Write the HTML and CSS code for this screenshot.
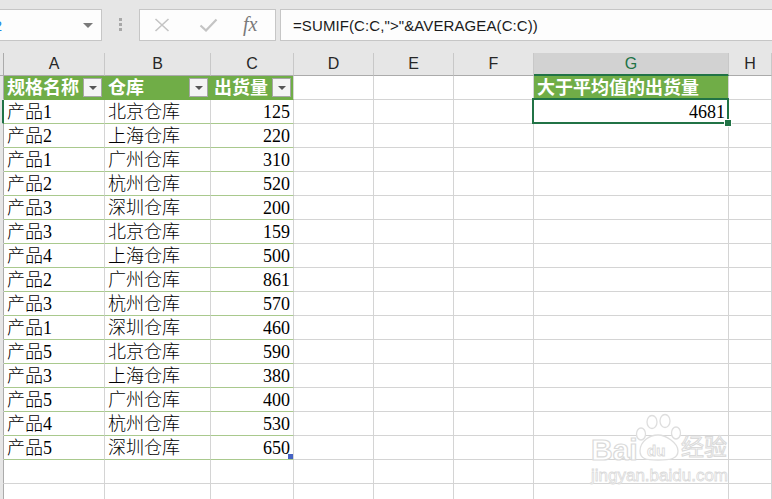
FILE: index.html
```html
<!DOCTYPE html>
<html lang="zh">
<head>
<meta charset="utf-8">
<title>Excel SUMIF</title>
<link rel="stylesheet" href="styles.css">
</head>
<body>
<div class="toolbar">
  <div class="namebox"><span class="nb-text">G2</span><span class="nb-arrow"></span></div>
  <div class="grip"><i></i><i></i><i></i></div>
  <div class="fxbox">
    <svg class="ic" width="16" height="14" viewBox="0 0 16 14"><path d="M1.5 1 L14.5 13 M14.5 1 L1.5 13" stroke="#c4c4c4" stroke-width="1.6" fill="none"/></svg>
    <svg class="ic" width="19" height="14" viewBox="0 0 19 14"><path d="M1.5 7.5 L7 12.5 L17.5 1.5" stroke="#c4c4c4" stroke-width="2.2" fill="none"/></svg>
    <span class="fx">fx</span>
  </div>
  <div class="formula">=SUMIF(C:C,"&gt;"&amp;AVERAGEA(C:C))</div>
</div>

<div class="sheet">
  <div class="row colhead">
    <div class="c rh"></div>
    <div class="c">A</div><div class="c">B</div><div class="c">C</div><div class="c">D</div><div class="c">E</div><div class="c">F</div><div class="c sel">G</div><div class="c">H</div>
  </div>

  <div class="row">
    <div class="c rh"></div>
    <div class="c th">规格名称<span class="flt"></span></div>
    <div class="c th">仓库<span class="flt"></span></div>
    <div class="c th last">出货量<span class="flt"></span></div>
    <div class="c"></div><div class="c"></div><div class="c"></div>
    <div class="c th gh">大于平均值的出货量</div><div class="c"></div>
  </div>

  <div class="row">
    <div class="c rh on"></div>
    <div class="c td">产品1</div><div class="c td">北京仓库</div><div class="c td num">125</div>
    <div class="c"></div><div class="c"></div><div class="c"></div>
    <div class="c num active">4681<span class="handle"></span></div><div class="c"></div>
  </div>
  <div class="row"><div class="c rh"></div><div class="c td">产品2</div><div class="c td">上海仓库</div><div class="c td num">220</div><div class="c"></div><div class="c"></div><div class="c"></div><div class="c"></div><div class="c"></div></div>
  <div class="row"><div class="c rh"></div><div class="c td">产品1</div><div class="c td">广州仓库</div><div class="c td num">310</div><div class="c"></div><div class="c"></div><div class="c"></div><div class="c"></div><div class="c"></div></div>
  <div class="row"><div class="c rh"></div><div class="c td">产品2</div><div class="c td">杭州仓库</div><div class="c td num">520</div><div class="c"></div><div class="c"></div><div class="c"></div><div class="c"></div><div class="c"></div></div>
  <div class="row"><div class="c rh"></div><div class="c td">产品3</div><div class="c td">深圳仓库</div><div class="c td num">200</div><div class="c"></div><div class="c"></div><div class="c"></div><div class="c"></div><div class="c"></div></div>
  <div class="row"><div class="c rh"></div><div class="c td">产品3</div><div class="c td">北京仓库</div><div class="c td num">159</div><div class="c"></div><div class="c"></div><div class="c"></div><div class="c"></div><div class="c"></div></div>
  <div class="row"><div class="c rh"></div><div class="c td">产品4</div><div class="c td">上海仓库</div><div class="c td num">500</div><div class="c"></div><div class="c"></div><div class="c"></div><div class="c"></div><div class="c"></div></div>
  <div class="row"><div class="c rh"></div><div class="c td">产品2</div><div class="c td">广州仓库</div><div class="c td num">861</div><div class="c"></div><div class="c"></div><div class="c"></div><div class="c"></div><div class="c"></div></div>
  <div class="row"><div class="c rh"></div><div class="c td">产品3</div><div class="c td">杭州仓库</div><div class="c td num">570</div><div class="c"></div><div class="c"></div><div class="c"></div><div class="c"></div><div class="c"></div></div>
  <div class="row"><div class="c rh"></div><div class="c td">产品1</div><div class="c td">深圳仓库</div><div class="c td num">460</div><div class="c"></div><div class="c"></div><div class="c"></div><div class="c"></div><div class="c"></div></div>
  <div class="row"><div class="c rh"></div><div class="c td">产品5</div><div class="c td">北京仓库</div><div class="c td num">590</div><div class="c"></div><div class="c"></div><div class="c"></div><div class="c"></div><div class="c"></div></div>
  <div class="row"><div class="c rh"></div><div class="c td">产品3</div><div class="c td">上海仓库</div><div class="c td num">380</div><div class="c"></div><div class="c"></div><div class="c"></div><div class="c"></div><div class="c"></div></div>
  <div class="row"><div class="c rh"></div><div class="c td">产品5</div><div class="c td">广州仓库</div><div class="c td num">400</div><div class="c"></div><div class="c"></div><div class="c"></div><div class="c"></div><div class="c"></div></div>
  <div class="row"><div class="c rh"></div><div class="c td">产品4</div><div class="c td">杭州仓库</div><div class="c td num">530</div><div class="c"></div><div class="c"></div><div class="c"></div><div class="c"></div><div class="c"></div></div>
  <div class="row"><div class="c rh"></div><div class="c td">产品5</div><div class="c td">深圳仓库</div><div class="c td num resize">650<span class="rsz"></span></div><div class="c"></div><div class="c"></div><div class="c"></div><div class="c"></div><div class="c"></div></div>
  <div class="row"><div class="c rh"></div><div class="c"></div><div class="c"></div><div class="c"></div><div class="c"></div><div class="c"></div><div class="c"></div><div class="c"></div><div class="c"></div></div>
  <div class="row"><div class="c rh"></div><div class="c"></div><div class="c"></div><div class="c"></div><div class="c"></div><div class="c"></div><div class="c"></div><div class="c"></div><div class="c"></div></div>

  <div class="watermark">
    <svg width="150" height="50" viewBox="0 0 150 50">
      <g fill="#ffffff" stroke="#dedede" stroke-width="1.3">
        <ellipse cx="64" cy="9" rx="5" ry="6.5"/>
        <ellipse cx="77" cy="8" rx="5" ry="6.5"/>
        <ellipse cx="53" cy="21" rx="4.5" ry="6"/>
        <ellipse cx="88" cy="20" rx="4.5" ry="6"/>
        <path d="M52 38 C52 28 62 22 70 22 C78 22 90 30 90 38 C90 46 82 47 70 47 C58 47 52 46 52 38 Z"/>
      </g>
    </svg>
    <span class="wm-bai">Bai</span><span class="wm-du">du</span><span class="wm-jy">经验</span>
    <span class="wm-url">jingyan.baidu.com</span>
  </div>
</div>
</body>
</html>
```
FILE: styles.css
```css
* { box-sizing: border-box; }
html, body { margin: 0; padding: 0; }
body {
  width: 772px;
  height: 499px;
  overflow: hidden;
  background: #ffffff;
  font-family: "Liberation Sans", "Noto Sans CJK SC", sans-serif;
}

/* ---------- toolbar ---------- */
.toolbar {
  height: 53px;
  background: #e6e6e6;
  display: flex;
  align-items: flex-start;
  padding-top: 9px;
}
.namebox {
  width: 102px;
  height: 32px;
  background: #fdfdfd;
  border: 1px solid #c6c6c6;
  border-left: none;
  display: flex;
  align-items: center;
  justify-content: space-between;
  overflow: hidden;
  padding-right: 8px;
}
.nb-text {
  font-size: 15px;
  color: #1e88e5;
  margin-left: -18px;
}
.nb-arrow {
  width: 0; height: 0;
  border-left: 5px solid transparent;
  border-right: 5px solid transparent;
  border-top: 5px solid #7a7a7a;
}
.grip {
  width: 4px;
  margin-left: 17px;
  margin-top: 9px;
  display: flex;
  flex-direction: column;
  gap: 2px;
}
.grip i { display: block; width: 3px; height: 3px; background: #a8a8a8; }
.fxbox {
  margin-left: 16px;
  width: 137px;
  height: 32px;
  background: #fdfdfd;
  border: 1px solid #c6c6c6;
  display: flex;
  align-items: center;
  padding-left: 14px;
}
.fxbox .ic:nth-child(1) { margin-right: 29px; }
.fxbox .ic:nth-child(2) { margin-right: 25px; }
.fx {
  font-family: "Liberation Serif", serif;
  font-style: italic;
  font-size: 20px;
  color: #7a7a7a;
  line-height: 1;
  margin-top: -3px;
}
.formula {
  margin-left: 4px;
  flex: 1;
  height: 32px;
  background: #fdfdfd;
  border: 1px solid #c6c6c6;
  border-right: none;
  font-size: 15px;
  letter-spacing: 0.1px;
  color: #1a1a1a;
  padding-left: 12px;
  display: flex;
  align-items: center;
}

/* ---------- sheet ---------- */
.sheet { position: relative; }
.row {
  display: grid;
  grid-template-columns: 4px 101px 106px 83px 80px 80px 80px 195px 1fr;
  grid-template-rows: 24px;
  height: 24px;
}
.c {
  border-right: 1px solid #d4d4d4;
  border-bottom: 1px solid #d4d4d4;
  display: flex;
  align-items: center;
  white-space: nowrap;
  line-height: 1;
  position: relative;
  min-height: 0;
}
.rh { background: #e6e6e6; border-right-color: #ababab; border-bottom-color: #e6e6e6; }
.rh.on { border-right: 2px solid #217346; }

.colhead { height: 23px; grid-template-rows: 23px; }
.colhead .c {
  background: #e6e6e6;
  border-right-color: #c8c8c8;
  border-bottom-color: #ababab;
  justify-content: center;
  font-size: 16px;
  color: #262626;
}
.colhead .c.rh { border-right-color: #ababab; }
.colhead .c.sel {
  background: #d2d2d2;
  color: #217346;
  border-bottom: 2px solid #217346;
}

.td, .th {
  font-family: "Liberation Serif", "Noto Sans CJK SC", serif;
  font-size: 18px;
  padding-left: 3px;
  border-bottom-color: #a9c98d;
}
.td { color: #000; font-weight: 300; }
.th {
  background: #70ad47;
  color: #ffffff;
  font-weight: bold;
  border-right-color: #70ad47;
  border-bottom-color: #70ad47;
  justify-content: space-between;
  padding-right: 2px;
}
.th.last { border-right-color: #d4d4d4; }
.th.gh { border-right-color: #d4d4d4; }
.flt {
  width: 19px;
  height: 19px;
  background: #f4f4f4;
  border: 1px solid #a6a6a6;
  display: flex;
  align-items: center;
  justify-content: center;
  flex: none;
}
.flt::after {
  content: "";
  border-left: 4px solid transparent;
  border-right: 4px solid transparent;
  border-top: 4px solid #555555;
}
.num {
  justify-content: flex-end;
  padding-right: 3px;
  font-family: "Liberation Serif", serif;
  font-size: 18px;
  color: #000;
}
.active::before {
  content: "";
  position: absolute;
  left: -2px; top: -2px; right: -1px; bottom: -1px;
  border: 2px solid #217346;
  pointer-events: none;
}
.handle {
  position: absolute;
  right: -4px;
  bottom: -4px;
  width: 6px;
  height: 6px;
  background: #217346;
  border: 1px solid #ffffff;
  box-sizing: content-box;
  z-index: 2;
}
.rsz {
  position: absolute;
  right: 0;
  bottom: 0;
  width: 5px;
  height: 5px;
  background: #4663c3;
}

/* ---------- watermark ---------- */
.watermark {
  position: absolute;
  left: 588px;
  top: 360px;
  width: 150px;
  height: 90px;
  pointer-events: none;
  font-family: "Liberation Sans", "Noto Sans CJK SC", sans-serif;
  line-height: 1;
}
.watermark svg { position: absolute; left: 0; top: 0; }
.wm-bai { position: absolute; left: 3px; top: 22px; font-size: 30px; font-weight: bold; color: #fff; -webkit-text-stroke: 1.2px #dadada; }
.wm-du { position: absolute; left: 59px; top: 30px; font-size: 15px; font-weight: bold; color: #fff; -webkit-text-stroke: 0.9px #dadada; }
.wm-jy { position: absolute; left: 93px; top: 23px; font-size: 23px; color: #fff; -webkit-text-stroke: 1px #dadada; }
.wm-url { position: absolute; left: 3px; top: 54px; font-size: 17px; color: #fff; -webkit-text-stroke: 0.8px #dadada; }
```
